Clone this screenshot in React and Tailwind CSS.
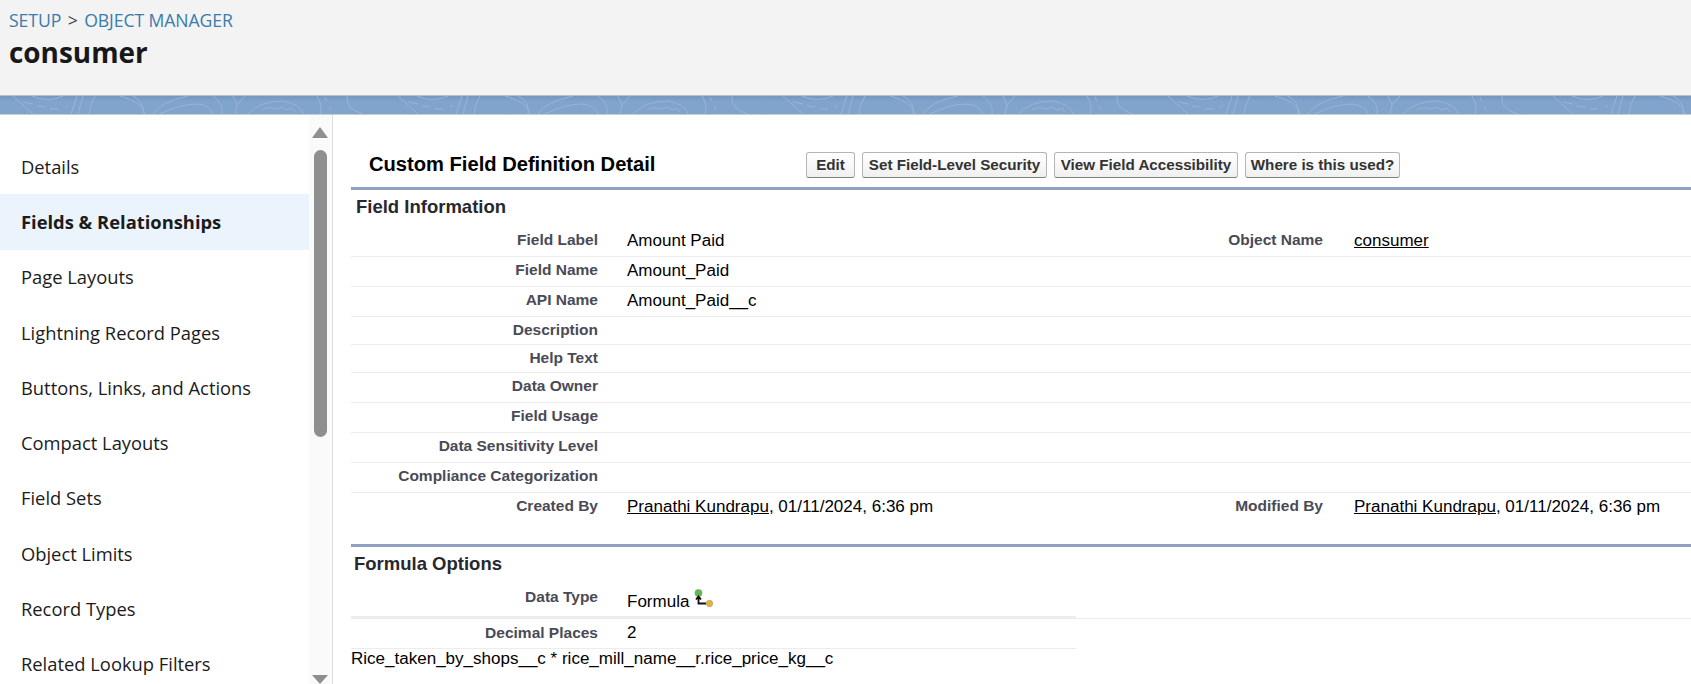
const nav = ["Details","Fields & Relationships","Page Layouts","Lightning Record Pages","Buttons, Links, and Actions","Compact Layouts","Field Sets","Object Limits","Record Types","Related Lookup Filters"];

function Band() {
  const tiles = [0, 385, 770, 1155, 1540];
  return (
    <svg className="block w-full h-full" viewBox="0 0 1691 18" preserveAspectRatio="none" fill="none" stroke="#98b5d5" strokeWidth="1">
      {tiles.map((x) => (
        <g key={x} transform={`translate(${x} 0)`}>
          <path d="M13 0L33 18M32 0Q48 7 63 0M23 6L33 8M37 10L45 11M50 13L58 13M65 12L68 9M77 0L71 18M83 0L78 18M95 0Q90 8 89 18" />
          <path d="M120 0Q143 6 145 18M133 0Q145 6 143 18M188 0Q160 6 153 18M160 18Q180 8 197 8Q210 9 213 18M213 0Q224 8 222 18" />
          <path d="M233 0L237 9L235 18M245 0L237 9M248 18Q260 5 283 5Q302 9 303 18M262 14Q268 10 276 13L282 11L287 14L292 12L295 16M317 0Q323 10 320 18" />
          <path d="M325 1L333 18" strokeDasharray="5 5" />
          <path d="M347 0Q345 13 363 18" />
        </g>
      ))}
    </svg>
  );
}

function Row({ label, value, label2, value2, h, border = "border-[#ececec]" }) {
  return (
    <div className={`flex border-b ${border} ${h}`}>
      <div className="w-[247px] pt-[5px] text-right font-bold text-[15.5px] leading-[16px] text-[#4a4a56] shrink-0 whitespace-nowrap">{label}</div>
      <div className="w-[575px] pl-[29px] pt-[5px] text-[17.03px] leading-[18px] text-black shrink-0">{value}</div>
      <div className="w-[150px] pt-[5px] text-right font-bold text-[15.5px] leading-[16px] text-[#4a4a56] shrink-0">{label2}</div>
      <div className="pl-[31px] pt-[5px] text-[17.03px] leading-[18px] text-black whitespace-nowrap">{value2}</div>
    </div>
  );
}

function Btn({ children, w }) {
  return (
    <button className={`${w} h-[26px] border border-[#b5b5b5] border-b-[#7f7f7f] rounded-[3px] bg-gradient-to-b from-white to-[#f0f0f0] font-bold text-[15.2px] leading-[24px] text-[#333] whitespace-nowrap text-center`}>{children}</button>
  );
}

function FormulaIcon() {
  return (
    <svg width="20" height="20" viewBox="0 0 20 20" className="ml-[5px] -mt-[4px] shrink-0">
      <circle cx="4.5" cy="4" r="3.6" fill="#5fbb4e" stroke="#7c9a76" strokeWidth="0.6" />
      <path d="M4.5 7.5V14.5H12M2 10.5L4.5 7.5L7 10.5" stroke="#111" strokeWidth="1.8" fill="none" />
      <circle cx="15.5" cy="14.5" r="3.2" fill="#e8b13a" stroke="#a89160" strokeWidth="0.6" />
    </svg>
  );
}

export default function App() {
  return (
    <div className="h-[684px] w-[1691px] overflow-hidden bg-white font-['Liberation_Sans',Arial,sans-serif]">
      <header className="h-[96px] bg-[#f3f3f3] border-b border-[#bdbdbd] pl-[9px] pt-[8px] font-['Open_Sans',sans-serif]">
        <div className="text-[17.65px] leading-[24px] text-[#3f3f3f] tracking-[-0.1px]">
          <a className="text-[#3a7cab]">SETUP</a> <span className="mx-[2px]">&gt;</span> <a className="text-[#3a7cab]">OBJECT MANAGER</a>
        </div>
        <h1 className="mt-[3px] text-[27.9px] leading-[34px] font-bold text-[#181818]">consumer</h1>
      </header>
      <div className="h-[19px] bg-gradient-to-b from-[#7397c1] to-[#80a4cc] to-[30%] border-b border-[#c3cfdc]"><Band /></div>
      <div className="flex h-[569px]">
        <aside className="w-[333px] shrink-0 flex border-r border-[#dddddd]">
          <nav className="w-[309px] shrink-0 pt-[24px] font-['Open_Sans',sans-serif] text-[18.35px] text-[#1b1b1b]">
            {nav.map((n, i) => (
              <div key={n} className={`h-[55.25px] pl-[21px] flex items-center whitespace-nowrap ${i === 1 ? "bg-[#ebf3fc] font-bold" : ""}`}>{n}</div>
            ))}
          </nav>
          <div className="flex-1 bg-[#fafafa] flex flex-col items-center pt-[12px] pr-[1px] relative">
            <div className="w-0 h-0 border-x-[8px] border-x-transparent border-b-[11px] border-b-[#8f8f8f]" />
            <div className="mt-[12px] w-[13px] h-[287px] rounded-full bg-[#8f8f8f]" />
            <div className="absolute bottom-0 left-[3px] w-0 h-0 border-x-[8px] border-x-transparent border-t-[9px] border-t-[#8f8f8f]" />
          </div>
        </aside>
        <main className="flex-1 pl-[18px]">
          <div className="flex h-[75px] pt-[37px] border-b-[3px] border-[#8fa0c0] items-start">
            <h2 className="w-[455px] pl-[18px] font-bold text-[20.15px] leading-[24px] text-black shrink-0">Custom Field Definition Detail</h2>
            <div className="flex gap-[7px]">
              <Btn w="w-[49px]">Edit</Btn>
              <Btn w="w-[185px]">Set Field-Level Security</Btn>
              <Btn w="w-[184px]">View Field Accessibility</Btn>
              <Btn w="w-[155px]">Where is this used?</Btn>
            </div>
          </div>
          <h3 className="pl-[5px] pt-[6px] h-[37px] font-bold text-[18.5px] leading-[22px] text-[#27282e]">Field Information</h3>
          <Row h="h-[30px]" label="Field Label" value="Amount Paid" label2="Object Name" value2={<a className="underline">consumer</a>} />
          <Row h="h-[30px]" label="Field Name" value="Amount_Paid" />
          <Row h="h-[30px]" label="API Name" value="Amount_Paid__c" />
          <Row h="h-[28px]" label="Description" />
          <Row h="h-[28px]" label="Help Text" />
          <Row h="h-[30px]" label="Data Owner" />
          <Row h="h-[30px]" label="Field Usage" />
          <Row h="h-[30px]" label="Data Sensitivity Level" />
          <Row h="h-[30px]" label="Compliance Categorization" />
          <Row h="h-[51px]" border="border-transparent" label="Created By"
            value={<span><a className="underline">Pranathi Kundrapu</a>, 01/11/2024, 6:36 pm</span>}
            label2="Modified By"
            value2={<span><a className="underline">Pranathi Kundrapu</a>, 01/11/2024, 6:36 pm</span>} />
          <div className="h-[3px] bg-[#8fa0c0]" />
          <h3 className="pl-[3px] pt-[6px] h-[35px] font-bold text-[18.5px] leading-[22px] text-[#27282e]">Formula Options</h3>
          <div className="h-[37px] border-b border-[#ececec] relative">
            <div className="flex h-[36px]">
              <div className="w-[247px] pt-[7px] text-right font-bold text-[15.5px] leading-[16px] text-[#4a4a56]">Data Type</div>
              <div className="pl-[29px] pt-[11px] flex items-start text-[17.03px] leading-[18px] text-black">Formula<FormulaIcon /></div>
            </div>
            <div className="absolute left-0 bottom-[-1px] w-[725px] h-[3px] bg-[#ececec]" />
          </div>
          <div className="w-[725px] h-[30px] border-b border-[#ececec] flex">
            <div className="w-[247px] pt-[6px] text-right font-bold text-[15.5px] leading-[16px] text-[#4a4a56]">Decimal Places</div>
            <div className="pl-[29px] pt-[5px] text-[17.03px] leading-[18px] text-black">2</div>
          </div>
          <div className="pt-[1px] text-[17.03px] leading-[18px] text-black">Rice_taken_by_shops__c * rice_mill_name__r.rice_price_kg__c</div>
        </main>
      </div>
    </div>
  );
}
